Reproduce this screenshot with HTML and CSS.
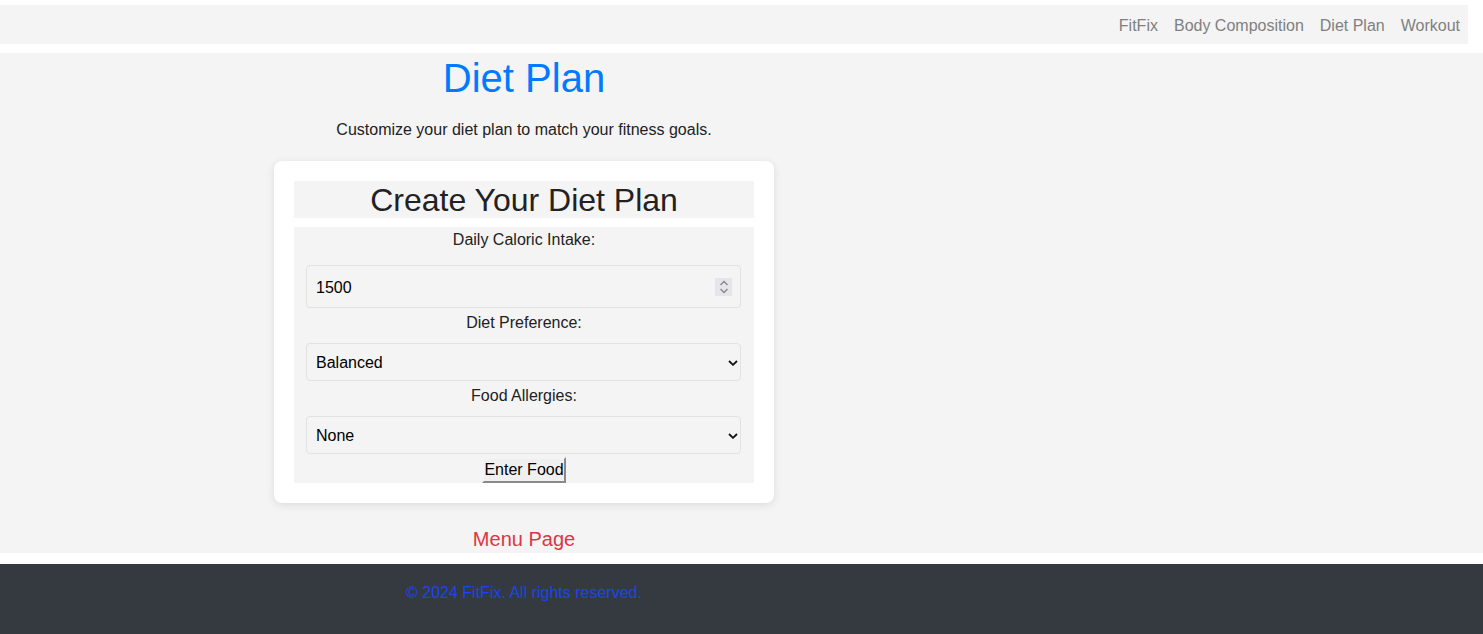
FILE: index.html
```html
<!DOCTYPE html>
<html lang="en">
<head>
<meta charset="utf-8">
<title>Diet Plan - FitFix</title>
<link rel="stylesheet" href="styles.css">
</head>
<body>
<header class="site-header">
  <nav class="nav">
    <a href="#" class="nav-link">FitFix</a>
    <a href="#" class="nav-link">Body Composition</a>
    <a href="#" class="nav-link">Diet Plan</a>
    <a href="#" class="nav-link">Workout</a>
  </nav>
</header>
<main class="main">
  <div class="column">
    <h1 class="title">Diet Plan</h1>
    <p class="subtitle">Customize your diet plan to match your fitness goals.</p>
    <section class="card">
      <h2 class="card-title">Create Your Diet Plan</h2>
      <form class="form">
        <label class="label label-first" for="cal">Daily Caloric Intake:</label>
        <div class="number-wrap">
          <input class="field field-number" id="cal" type="number" value="1500">
          <span class="spinner" aria-hidden="true">
            <svg width="12" height="16" viewBox="0 0 12 16">
              <path d="M2.5 6 L6 2.5 L9.5 6" fill="none" stroke="#8a8a8a" stroke-width="1.4"/>
              <path d="M2.5 10 L6 13.5 L9.5 10" fill="none" stroke="#8a8a8a" stroke-width="1.4"/>
            </svg>
          </span>
        </div>
        <label class="label" for="pref">Diet Preference:</label>
        <div class="select-wrap">
          <select class="field field-select" id="pref">
            <option>Balanced</option>
            <option>Low Carb</option>
            <option>High Protein</option>
          </select>
          <svg class="chevron" width="10" height="6" viewBox="0 0 10 6" aria-hidden="true">
            <path d="M1 1 L5 4.8 L9 1" fill="none" stroke="#111" stroke-width="1.8"/>
          </svg>
        </div>
        <label class="label" for="allergy">Food Allergies:</label>
        <div class="select-wrap">
          <select class="field field-select" id="allergy">
            <option>None</option>
            <option>Nuts</option>
            <option>Dairy</option>
          </select>
          <svg class="chevron" width="10" height="6" viewBox="0 0 10 6" aria-hidden="true">
            <path d="M1 1 L5 4.8 L9 1" fill="none" stroke="#111" stroke-width="1.8"/>
          </svg>
        </div>
        <button class="btn" type="button">Enter Food</button>
      </form>
    </section>
    <a href="#" class="menu-link">Menu Page</a>
  </div>
</main>
<footer class="footer">
  <div class="column">
    <p class="copy">© 2024 FitFix. All rights reserved.</p>
  </div>
</footer>
</body>
</html>
```

FILE: styles.css
```css
html, body {
  margin: 0;
  padding: 0;
  background: #ffffff;
  font-family: "Liberation Sans", Arial, sans-serif;
}

.site-header {
  margin-top: 5px;
  width: 1468px;
  height: 39px;
  background: #f4f4f4;
  display: flex;
  align-items: center;
  justify-content: flex-end;
}

.nav {
  display: flex;
  gap: 16px;
  padding-right: 8px;
  padding-top: 2px;
}

.nav-link {
  color: #808080;
  font-size: 16px;
  text-decoration: none;
}

.main {
  margin-top: 9px;
  height: 500px;
  background: #f4f4f4;
  overflow: hidden;
}

.column {
  width: 1048px;
  display: flex;
  flex-direction: column;
  align-items: center;
}

.title {
  margin: 2px 0 0;
  font-size: 40px;
  font-weight: normal;
  line-height: 46px;
  color: #007bff;
}

.subtitle {
  margin: 19px 0 0;
  font-size: 16px;
  line-height: 19px;
  color: #222;
}

.card {
  margin-top: 22px;
  width: 460px;
  padding: 20px;
  background: #ffffff;
  border-radius: 8px;
  box-shadow: 0 2px 8px rgba(0, 0, 0, 0.1);
}

.card-title {
  margin: 0;
  padding-top: 1px;
  background: #f4f4f4;
  font-size: 32px;
  font-weight: normal;
  line-height: 36px;
  text-align: center;
  color: #222;
}

.form {
  margin-top: 9px;
  background: #f4f4f4;
  display: flex;
  flex-direction: column;
  align-items: center;
}

.label {
  display: block;
  margin-top: 6px;
  font-size: 16px;
  line-height: 18px;
  color: #222;
}

.label-first {
  margin-top: 4px;
}

.field {
  box-sizing: border-box;
  width: 435px;
  border: 1px solid #e2e2e2;
  border-radius: 4px;
  background: #f4f4f4;
  font-family: "Liberation Sans", Arial, sans-serif;
  font-size: 16px;
  color: #000;
  padding: 0 9px;
}

.number-wrap {
  position: relative;
  margin-top: 16px;
  margin-left: -1px;
  width: 435px;
  height: 43px;
}

.field-number {
  height: 43px;
  padding-top: 2px;
  -moz-appearance: textfield;
}

.field-number::-webkit-inner-spin-button,
.field-number::-webkit-outer-spin-button {
  -webkit-appearance: none;
  margin: 0;
}

.spinner {
  position: absolute;
  left: 409px;
  top: 13px;
  width: 17px;
  height: 18px;
  background: #e6e6ea;
  display: flex;
  align-items: center;
  justify-content: center;
}

.select-wrap {
  position: relative;
  margin-top: 11px;
  margin-left: -1px;
  width: 435px;
  height: 38px;
}

.field-select {
  display: block;
  height: 38px;
  -webkit-appearance: none;
  appearance: none;
}

.chevron {
  position: absolute;
  left: 422px;
  top: 17px;
  pointer-events: none;
}

.btn {
  margin-top: 3px;
  height: 26px;
  padding: 0;
  font-family: "Liberation Sans", Arial, sans-serif;
  font-size: 16px;
  color: #000;
  background: #f0f0f0;
  border-width: 2px;
  border-style: solid;
  border-color: #f4f4f4 #8a8a8a #8a8a8a #f4f4f4;
  border-radius: 0;
}

.menu-link {
  margin-top: 25px;
  font-size: 20px;
  line-height: 23px;
  color: #dc3545;
  text-decoration: none;
}

.footer {
  margin-top: 11px;
  height: 70px;
  background: #343a40;
  overflow: hidden;
}

.copy {
  margin: 20px 0 0;
  font-size: 16px;
  line-height: 18px;
  color: #1a45ee;
}
```
